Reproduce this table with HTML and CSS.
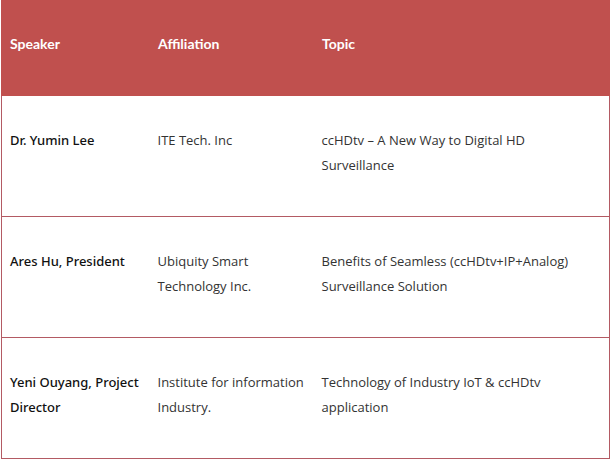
FILE: index.html
```html
<!DOCTYPE html>
<html>
<head>
<meta charset="utf-8">
<link rel="stylesheet" href="styles.css">
</head>
<body>
<table class="schedule">
  <thead>
    <tr>
      <th class="col-speaker">Speaker</th>
      <th class="col-aff">Affiliation</th>
      <th class="col-topic">Topic</th>
    </tr>
  </thead>
  <tbody>
    <tr>
      <td class="speaker">Dr. Yumin Lee</td>
      <td>ITE Tech. Inc</td>
      <td>ccHDtv – A New Way to Digital HD Surveillance</td>
    </tr>
    <tr>
      <td class="speaker">Ares Hu, President</td>
      <td>Ubiquity Smart Technology Inc.</td>
      <td>Benefits of Seamless (ccHDtv+IP+Analog) Surveillance Solution</td>
    </tr>
    <tr>
      <td class="speaker">Yeni Ouyang, Project Director</td>
      <td>Institute for information Industry.</td>
      <td>Technology of Industry IoT &amp; ccHDtv application</td>
    </tr>
  </tbody>
</table>
</body>
</html>
```
FILE: styles.css
```css
html, body {
  margin: 0;
  padding: 0;
  background: #ffffff;
}
body {
  padding-left: 1px;
}
.schedule {
  border-collapse: collapse;
  width: 609px;
  table-layout: fixed;
  font-family: "Open Sans", "Noto Sans", sans-serif;
  font-size: 13px;
  line-height: 25px;
  color: #333333;
}
.schedule th,
.schedule td {
  box-sizing: border-box;
}
.col-speaker { width: 148px; }
.col-aff { width: 164px; }
.schedule th {
  background: #c0504e;
  color: #ffffff;
  font-family: Lato, sans-serif;
  font-weight: 700;
  font-size: 14px;
  text-align: left;
  vertical-align: top;
  padding: 31px 8px 40px;
  border-left: 1px solid #c0504e;
  border-right: 1px solid #c0504e;
}
.schedule td {
  vertical-align: top;
  padding: 32px 8px 38px;
  border-bottom: 1px solid #b35a63;
}
.schedule td:first-child { border-left: 1px solid #b35a63; }
.schedule td:last-child { border-right: 1px solid #b35a63; }
.schedule .speaker {
  color: #111111;
  font-family: "Noto Sans", "Open Sans", sans-serif;
  font-weight: 500;
}
```
